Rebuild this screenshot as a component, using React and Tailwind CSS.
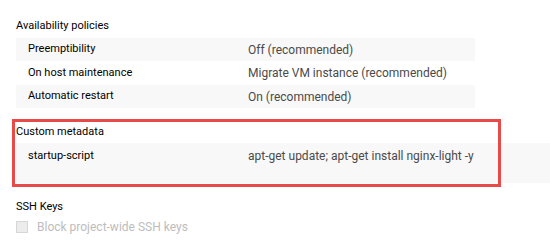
export default function App() {
  const policies = [
    { label: "Preemptibility", value: "Off (recommended)", shaded: true },
    { label: "On host maintenance", value: "Migrate VM instance (recommended)", shaded: false },
    { label: "Automatic restart", value: "On (recommended)", shaded: true },
  ];

  return (
    <div
      className="relative h-[244px] w-[550px] overflow-hidden bg-white text-[11px] text-black"
      style={{ fontFamily: "Roboto, 'Liberation Sans', sans-serif" }}
    >
      <div className="pt-[13px]">
        <div className="ml-4 h-[25px] leading-[25px]">Availability policies</div>

        <div className="ml-4 w-[459px]">
          {policies.map((p, i) => (
            <div
              key={p.label}
              className={
                (p.shaded ? "bg-[#f8f8f8] " : "") +
                (i === 1 ? "h-[24px] " : "h-[23px] ") +
                "flex items-center"
              }
            >
              <div className="w-[232px] pl-3">{p.label}</div>
              <div className="text-[12px] text-[#4a4a4a]">{p.value}</div>
            </div>
          ))}
        </div>

        <div className="ml-4 mt-[13px] h-[22px] leading-[22px]">Custom metadata</div>
        <div className="ml-4 h-[40px] bg-[#f8f8f8]">
          <div className="flex h-[26px] items-center">
            <div className="w-[232px] pl-3">startup-script</div>
            <div className="text-[12px] text-[#4a4a4a]">apt-get update; apt-get install nginx-light -y</div>
          </div>
        </div>

        <div className="ml-4 mt-[12px] h-[24px] leading-[24px]">SSH Keys</div>
        <div className="ml-4 flex h-[16px] items-center gap-[9px]">
          <span className="block h-[12px] w-[12px] border border-[#d6d6d6] bg-[#ececec]" />
          <span className="text-[12px] text-[#bdbdbd]">Block project-wide SSH keys</span>
        </div>
      </div>

      <div className="absolute left-[12px] top-[119px] h-[68px] w-[489px] border-[3px] border-[#e84a4a]" />
    </div>
  );
}
